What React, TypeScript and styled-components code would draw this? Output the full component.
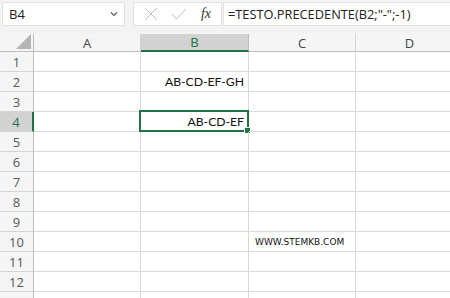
import React from "react";
import styled, { createGlobalStyle } from "styled-components";

const GlobalStyle = createGlobalStyle`
  html, body { margin: 0; padding: 0; background: #ffffff; overflow: hidden; }
  body { font-family: "Open Sans", "Noto Sans", sans-serif; }
`;

const GREEN = "#217346";
const GRID = "#d9d9d9";

const Sheet = styled.div`
  width: 450px;
  height: 298px;
  overflow: hidden;
  background: #fff;
`;

const TopBar = styled.div`
  height: 34px;
  box-sizing: border-box;
  background: #f3f3f3;
  display: flex;
  align-items: flex-start;
  padding: 2px 0 0 2px;
  gap: 8px;
`;

const NameBox = styled.div`
  width: 123px;
  height: 24px;
  box-sizing: border-box;
  background: #fff;
  border: 1px solid #e1e1e1;
  display: flex;
  align-items: center;
  justify-content: space-between;
  padding: 0 6px 0 6px;
  font-size: 13px;
  color: #222;
`;

const IconBox = styled.div`
  width: 89px;
  height: 24px;
  box-sizing: border-box;
  background: #fff;
  border: 1px solid #e1e1e1;
  display: flex;
  align-items: center;
  justify-content: space-between;
  padding: 0 10px 0 10px;
`;

const Fx = styled.span`
  font-family: "Liberation Serif", serif;
  font-style: italic;
  font-size: 14px;
  color: #333;
`;

const FormulaInput = styled.div`
  flex: 1;
  height: 24px;
  box-sizing: border-box;
  background: #fff;
  border: 1px solid #e1e1e1;
  border-right: none;
  margin-left: -7px;
  display: flex;
  align-items: center;
  padding-left: 4px;
  font-size: 12.8px;
  color: #222;
  white-space: nowrap;
`;

const Grid = styled.div`
  display: grid;
  grid-template-columns: 34px 107px 108px 107px 108px;
  grid-template-rows: 18px repeat(13, 20px);
`;

const Corner = styled.div`
  background: #f5f5f5;
  border-right: 1px solid #bdbdbd;
  border-bottom: 1px solid #bdbdbd;
  display: flex;
  align-items: flex-end;
  justify-content: flex-end;
  padding: 0 2px 2px 0;
`;

const ColHead = styled.div<{ $active?: boolean }>`
  background: ${(p) => (p.$active ? "#d2d2d2" : "#f5f5f5")};
  border-right: 1px solid ${(p) => (p.$active ? "#bdbdbd" : "#d4d4d4")};
  border-bottom: ${(p) => (p.$active ? `2px solid ${GREEN}` : "1px solid #bdbdbd")};
  display: flex;
  align-items: center;
  justify-content: center;
  font-size: 13px;
  color: ${(p) => (p.$active ? GREEN : "#444")};
`;

const RowHead = styled.div<{ $active?: boolean }>`
  background: ${(p) => (p.$active ? "#d2d2d2" : "#f5f5f5")};
  border-right: ${(p) => (p.$active ? `2px solid ${GREEN}` : "1px solid #bdbdbd")};
  border-bottom: 1px solid #d4d4d4;
  display: flex;
  align-items: center;
  justify-content: center;
  font-size: 13px;
  color: ${(p) => (p.$active ? GREEN : "#555")};
`;

const Cell = styled.div<{ $align?: "left" | "right" }>`
  border-right: 1px solid ${GRID};
  border-bottom: 1px solid ${GRID};
  position: relative;
  display: flex;
  align-items: flex-end;
  justify-content: ${(p) => (p.$align === "left" ? "flex-start" : "flex-end")};
  padding: 0 4px 2px 4px;
  font-family: "Lato", "Open Sans", sans-serif;
  font-size: 12.2px;
  color: #111;
  white-space: nowrap;
`;

const Site = styled.span`
  font-family: "DejaVu Sans", sans-serif;
  font-size: 9px;
  color: #111;
  padding: 0 0 2px 2px;
`;

const Selection = styled.div`
  position: absolute;
  left: -2px;
  top: -2px;
  right: -1px;
  bottom: -1px;
  border: 2px solid ${GREEN};
  pointer-events: none;
`;

const Handle = styled.div`
  position: absolute;
  right: -4px;
  bottom: -4px;
  width: 5px;
  height: 5px;
  background: ${GREEN};
  border: 1px solid #fff;
`;

const cols = ["A", "B", "C", "D"];
const rows = Array.from({ length: 13 }, (_, i) => i + 1);

export default function App() {
  return (
    <Sheet>
      <GlobalStyle />
      <TopBar>
        <NameBox>
          <span>B4</span>
          <svg width="8" height="6" viewBox="0 0 8 6">
            <path d="M1 1.5 L4 4.5 L7 1.5" stroke="#555" strokeWidth="1.1" fill="none" />
          </svg>
        </NameBox>
        <IconBox>
          <svg width="14" height="14" viewBox="0 0 14 14">
            <path d="M1 1 L13 13 M13 1 L1 13" stroke="#bdbdbd" strokeWidth="1" fill="none" />
          </svg>
          <svg width="16" height="12" viewBox="0 0 16 12">
            <path d="M1 6 L5.5 11 L15 1" stroke="#bdbdbd" strokeWidth="1" fill="none" />
          </svg>
          <Fx>fx</Fx>
        </IconBox>
        <FormulaInput>=TESTO.PRECEDENTE(B2;"-";-1)</FormulaInput>
      </TopBar>
      <Grid>
        <Corner>
          <svg width="15" height="15" viewBox="0 0 15 15">
            <path d="M15 0 L15 15 L0 15 Z" fill="#b4b4b4" />
          </svg>
        </Corner>
        {cols.map((c) => (
          <ColHead key={c} $active={c === "B"}>
            {c}
          </ColHead>
        ))}
        {rows.map((r) => (
          <React.Fragment key={r}>
            <RowHead $active={r === 4}>{r < 13 ? r : ""}</RowHead>
            {cols.map((c) => (
              <Cell key={c} $align={c === "C" ? "left" : "right"}>
                {c === "B" && r === 2 && "AB-CD-EF-GH"}
                {c === "B" && r === 4 && (
                  <>
                    AB-CD-EF
                    <Selection>
                      <Handle />
                    </Selection>
                  </>
                )}
                {c === "C" && r === 10 && <Site>WWW.STEMKB.COM</Site>}
              </Cell>
            ))}
          </React.Fragment>
        ))}
      </Grid>
    </Sheet>
  );
}
